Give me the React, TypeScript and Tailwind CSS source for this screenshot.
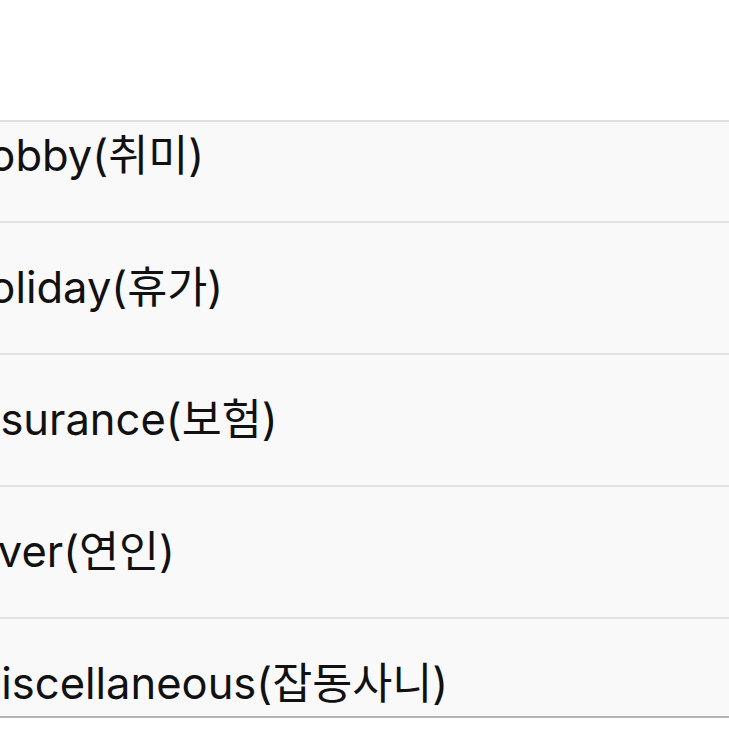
const items = [
  { label: 'Hobby(취미)', shift: 'ml-[-43px]' },
  { label: 'Holiday(휴가)', shift: 'ml-[-43px]' },
  { label: 'Insurance(보험)', shift: 'ml-[-37px]' },
  { label: 'Lover(연인)', shift: 'ml-[-52px]' },
  { label: 'Miscellaneous(잡동사니)', shift: 'ml-[-38px]' },
];

export default function App() {
  return (
    <div
      className="flex h-[729px] w-[729px] flex-col overflow-hidden bg-white"
      style={{ fontFamily: 'Inter, "Noto Sans CJK KR", sans-serif' }}
    >
      <div className="h-[120px] shrink-0 bg-white" />
      <div className="h-[598px] shrink-0 overflow-hidden border-y-2 border-t-[#dedede] border-b-[#b4b4b4] bg-[#f9f9f9]">
        <div className="-mt-[31px]">
          {items.map((item) => (
            <div
              key={item.label}
              className="flex h-[132px] items-center border-b-2 border-[#e3e3e3]"
            >
              <span className={`${item.shift} whitespace-nowrap text-[43.5px] text-[#111]`}>
                {item.label}
              </span>
            </div>
          ))}
        </div>
      </div>
    </div>
  );
}
